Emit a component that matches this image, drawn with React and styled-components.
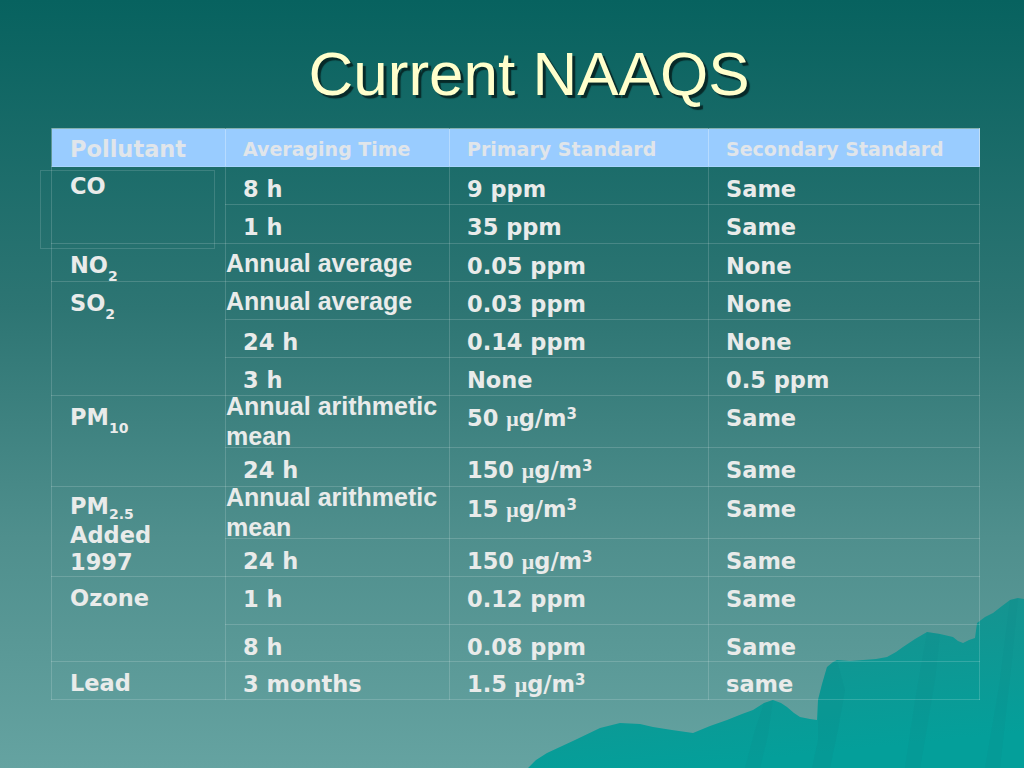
import React from "react"
import styled, { createGlobalStyle } from "styled-components"

const GlobalStyle = createGlobalStyle`
  html, body {
    margin: 0;
    padding: 0;
  }
  body {
    width: 1024px;
    height: 768px;
    overflow: hidden;
  }
`

const colors = {
  text: "#e9ebea",
  headerBg: "#99ccff",
  headerText: "#e0e5ea",
  grid: "rgba(255, 255, 255, 0.16)",
  frame: "rgba(225, 235, 235, 0.55)",
}

const rows = [
  { h: 38, pollutant: { span: 2, content: "CO", top: 6 }, time: "8 h", primary: "9 ppm", secondary: "Same" },
  { h: 39, time: "1 h", primary: "35 ppm", secondary: "Same" },
  { h: 38, pollutant: { span: 1, content: ["NO", "2"] }, annual: "Annual average", primary: "0.05 ppm", secondary: "None" },
  { h: 38, pollutant: { span: 3, content: ["SO", "2"] }, annual: "Annual average", primary: "0.03 ppm", secondary: "None" },
  { h: 38, time: "24 h", primary: "0.14 ppm", secondary: "None" },
  { h: 38, time: "3 h", primary: "None", secondary: "0.5 ppm" },
  { h: 52, pollutant: { span: 2, content: ["PM", "10"] }, annual: "Annual arithmetic mean", lift: true, primary: { n: "50" }, secondary: "Same" },
  { h: 39, time: "24 h", primary: { n: "150" }, secondary: "Same" },
  { h: 51, pollutant: { span: 2, content: ["PM", "2.5"], note: ["Added", "1997"], top: 6 }, annual: "Annual arithmetic mean", lift: true, primary: { n: "15" }, secondary: "Same" },
  { h: 38, time: "24 h", primary: { n: "150" }, secondary: "Same" },
  { h: 48, pollutant: { span: 2, content: "Ozone" }, time: "1 h", primary: "0.12 ppm", secondary: "Same" },
  { h: 37, time: "8 h", primary: "0.08 ppm", secondary: "Same" },
  { h: 38, pollutant: { span: 1, content: "Lead" }, time: "3 months", primary: { n: "1.5" }, secondary: "same" },
]

const Slide = styled.main`
  position: relative;
  width: 1024px;
  height: 768px;
  overflow: hidden;
  display: flex;
  flex-direction: column;
  background: linear-gradient(180deg, #07625f 0%, #2d7573 40%, #4f8f8d 70%, #65a3a1 100%);
  font-family: "DejaVu Sans", Verdana, sans-serif;
`

const Title = styled.h1`
  position: relative;
  z-index: 1;
  margin: 0;
  padding: 38px 0 0 34px;
  height: 71px;
  line-height: 71px;
  text-align: center;
  font-family: "Liberation Sans", Arial, sans-serif;
  font-weight: normal;
  font-size: 62px;
  color: #ffffcc;
  text-shadow: 3px 3px 1px rgba(0, 0, 0, 0.6);
`

const TableWrap = styled.div`
  position: relative;
  z-index: 1;
  margin: 19px 0 0 51px;
  width: 928px;
`

const StrayFrame = styled.div`
  position: absolute;
  left: -11px;
  top: 42px;
  width: 173px;
  height: 77px;
  border: 1px solid rgba(255, 255, 255, 0.14);
  pointer-events: none;
`

const Table = styled.table`
  width: 928px;
  border-collapse: collapse;
  table-layout: fixed;
  border: 1px solid ${colors.frame};
  color: ${colors.text};
  font-weight: bold;
`

const HeadCell = styled.th`
  height: 38px;
  padding: ${p => (p.$big ? "7px 0 0 18px" : "9px 0 0 17px")};
  box-sizing: border-box;
  vertical-align: top;
  text-align: left;
  background: ${colors.headerBg};
  color: ${colors.headerText};
  font-size: ${p => (p.$big ? "22.5px" : "19px")};
  line-height: ${p => (p.$big ? "27px" : "23px")};
  font-weight: bold;
  white-space: nowrap;
  border-left: 1px solid rgba(255, 255, 255, 0.3);
  border-bottom: 1px solid ${colors.grid};
`

const Cell = styled.td`
  box-sizing: border-box;
  vertical-align: top;
  padding: ${p => p.$pad || "9px 0 0 17px"};
  font-size: 22.5px;
  line-height: 26px;
  white-space: nowrap;
  border: 1px solid ${colors.grid};
`

const PollutantLines = styled.div`
  line-height: ${p => (p.$tight ? "27px" : "26px")};
`

const Note = styled.div`
  &:first-of-type {
    margin-top: 2px;
  }
`

const Sub = styled.sub`
  font-size: 14px;
  line-height: 0;
  vertical-align: ${p => (p.$tight ? "-5px" : "-8px")};
`

const Sup = styled.sup`
  font-size: 15px;
  line-height: 0;
  vertical-align: 7px;
`

const Mu = styled.span`
  font-family: "Liberation Serif", "Times New Roman", serif;
  font-weight: bold;
  font-size: 22px;
`

const Annual = styled.div`
  font-family: "Liberation Sans", Arial, sans-serif;
  font-size: 25px;
  line-height: 30px;
  white-space: normal;
  width: 222px;
  margin: ${p => (p.$lift ? "-11px 0 -19px" : "-2px 0 0")};
`

const Mountain = styled.svg`
  position: absolute;
  left: 0;
  bottom: 0;
  width: 1024px;
  height: 768px;
  z-index: 0;
`

const Chemical = ({ content, tight }) =>
  Array.isArray(content) ? (
    <>
      {content[0]}
      <Sub $tight={tight}>{content[1]}</Sub>
    </>
  ) : (
    content
  )

const Concentration = ({ value }) =>
  typeof value === "string" ? (
    value
  ) : (
    <>
      {value.n} <Mu>μ</Mu>g/m<Sup>3</Sup>
    </>
  )

const MountainArt = () => (
  <Mountain viewBox="0 0 1024 768" aria-hidden="true">
    <defs>
      <linearGradient id="peak" x1="0" y1="0" x2="0.3" y2="1">
        <stop offset="0%" stopColor="#1c8f8c" />
        <stop offset="100%" stopColor="#049f9a" />
      </linearGradient>
    </defs>
    <path
      fill="url(#peak)"
      d="M528 768 L536 760 L547 753 L575 740 L600 728 L620 723 L640 724 L653 727 L672 730 L693 733 L710 726 L727 720 L742 714 L753 710 L764 703 L773 700 L781 703 L787 707 L794 713 L800 717 L810 719 L817 720 L818 700 L822 684 L827 667 L833 662 L837 660 L850 661 L863 660 L876 659 L887 657 L896 652 L903 647 L915 639 L927 632 L940 634 L953 637 L958 641 L963 643 L969 640 L975 638 L977 623 L985 617 L993 613 L1002 606 L1010 600 L1018 598 L1024 599 L1024 768 Z"
    />
    <path
      fill="#0c8783"
      opacity="0.18"
      d="M818 700 L827 667 L837 660 L845 690 L838 730 L830 768 L812 768 L818 740 Z"
    />
    <path
      fill="#0c8783"
      opacity="0.15"
      d="M927 632 L940 634 L935 680 L925 740 L920 768 L905 768 L915 700 Z"
    />
    <path
      fill="#0c8783"
      opacity="0.15"
      d="M1010 600 L1018 598 L1012 660 L1000 768 L985 768 L1000 680 Z"
    />
    <path
      fill="#0c8783"
      opacity="0.15"
      d="M764 703 L773 700 L768 735 L760 768 L745 768 L755 730 Z"
    />
  </Mountain>
)

const App = () => (
  <Slide>
    <GlobalStyle />
    <MountainArt />
    <Title>Current NAAQS</Title>
    <TableWrap>
      <StrayFrame />
      <Table>
        <colgroup>
          <col style={{ width: 174 }} />
          <col style={{ width: 224 }} />
          <col style={{ width: 259 }} />
          <col style={{ width: 271 }} />
        </colgroup>
        <thead>
          <tr>
            <HeadCell $big>Pollutant</HeadCell>
            <HeadCell>Averaging Time</HeadCell>
            <HeadCell>Primary Standard</HeadCell>
            <HeadCell>Secondary Standard</HeadCell>
          </tr>
        </thead>
        <tbody>
          {rows.map((row, i) => (
            <tr key={i} style={{ height: row.h }}>
              {row.pollutant && (
                <Cell
                  rowSpan={row.pollutant.span}
                  $pad={`${row.pollutant.top ?? 8}px 0 0 18px`}
                >
                  <PollutantLines $tight={!!row.pollutant.note}>
                    <Chemical
                      content={row.pollutant.content}
                      tight={!!row.pollutant.note}
                    />
                    {row.pollutant.note &&
                      row.pollutant.note.map(line => <Note key={line}>{line}</Note>)}
                  </PollutantLines>
                </Cell>
              )}
              {row.annual ? (
                <Cell $pad="6px 0 0 0">
                  <Annual $lift={row.lift}>{row.annual}</Annual>
                </Cell>
              ) : (
                <Cell>{row.time}</Cell>
              )}
              <Cell>
                <Concentration value={row.primary} />
              </Cell>
              <Cell>{row.secondary}</Cell>
            </tr>
          ))}
        </tbody>
      </Table>
    </TableWrap>
  </Slide>
)

export default App
